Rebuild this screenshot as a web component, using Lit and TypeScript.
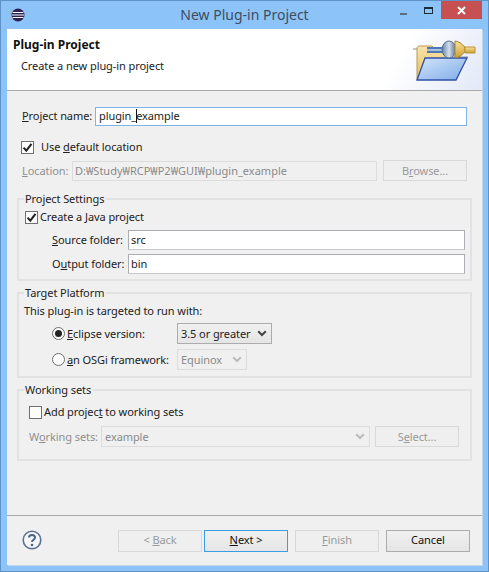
import { LitElement, html, css, svg } from "lit";
import { customElement } from "lit/decorators.js";

const chevron = (c: string) => svg`<svg width="10" height="7" viewBox="0 0 10 7"><path d="M1.2 1.2 5 5l3.8-3.8" fill="none" stroke="${c}" stroke-width="2"/></svg>`;
const check = svg`<svg width="11" height="11" viewBox="0 0 11 11"><path d="M1.6 5.6 4.3 8.6 9.5 1.8" fill="none" stroke="#222" stroke-width="2"/></svg>`;

@customElement("app-root")
export class AppRoot extends LitElement {
  static styles = css`
    :host { display: block; width: 489px; height: 572px; font: 11px/16px "Noto Sans", "Open Sans", sans-serif; letter-spacing: -0.08px; color: #222; }
    * { box-sizing: border-box; }
    u { text-underline-offset: 1px; }
    span { white-space: nowrap; }
    .win { height: 572px; border: 1px solid #5f93c6; background: #8cc4fa; display: flex; flex-direction: column; }
    .title { height: 28px; flex: none; display: grid; grid-template-columns: 1fr auto 1fr; align-items: start; }
    .logo { margin: 6px 0 0 9px; display: block; }
    .title-text { font-size: 14px; line-height: 28px; letter-spacing: 0; color: #3f4d5c; }
    .wctl { display: flex; justify-content: flex-end; align-items: flex-start; margin-right: 6px; }
    .min { width: 7px; height: 2px; background: #5b6f84; margin: 12px 17px 0 0; }
    .max { width: 9px; height: 7px; border: 1px solid #1e2b38; border-top-width: 2px; margin: 6px 8px 0 0; }
    .close { width: 41px; height: 18px; background: #c75050; display: grid; place-items: center; }
    .client { flex: 1; margin: 0 6px 6px 6px; background: #f0f0f0; display: flex; flex-direction: column; box-shadow: 1px 1px 0 #c4d8ec; }
    .head { height: 62px; flex: none; background: linear-gradient(120deg, #fff 80%, #e2e8f8 100%); border-bottom: 1px solid #a9a9a9; display: flex; justify-content: space-between; padding: 8px 4px 0 6px; }
    .head svg { margin-top: -1px; }
    .head h1 { margin: 0; font-size: 12px; line-height: 16px; font-weight: 700; letter-spacing: 0; color: #111; }
    .head p { margin: 5px 0 0 8px; color: #222; }
    .body { flex: 1; padding: 15px 10px 0 10px; }
    .row { display: flex; align-items: center; padding: 0 5px; }
    .name { height: 21px; padding-bottom: 1px; }
    .nl { width: 73px; flex: none; }
    .field { height: 20px; background: #fff; border: 1px solid #abadb3; border-bottom-color: #c8c8cc; display: flex; align-items: center; padding: 0 0 1px 2px; flex: 1; }
    .field.focus { border: 1px solid #7eb4ea; padding-left: 3px; height: 19px; }
    .caret { width: 1px; height: 14px; background: #111; margin-right: -1px; }
    .cb { width: 13px; height: 13px; flex: none; background: #fdfdfd; border: 1px solid #707070; display: grid; place-items: center; }
    .dis { color: #8f8f8f; }
    .off { height: 20px; background: #f0f0f0; border: 1px solid #dcdcdc; color: #8a8a8a; display: flex; align-items: center; padding-left: 2px; letter-spacing: 0; }
    .btn { height: 21px; width: 84px; flex: none; display: grid; place-items: center; border: 1px solid #d9d9d9; background: #efefef; color: #9a9a9a; }
    .btn.live { color: #111; border-color: #acacac; background: linear-gradient(#f0f0f0, #e5e5e5); }
    .btn.def { border-color: #3c9ce6; color: #111; background: linear-gradient(#f0f0f0, #e5e5e5); margin-left: 2px; }
    .btn.gap { margin-left: 7px; }
    fieldset { margin: 4px 0 0; padding: 0 5px; border: 2px solid #e2e2e2; min-width: 0; }
    legend { padding: 0 2px 0 1px; margin-left: 0; line-height: 16px; }
    .sel { height: 21px; flex: none; display: flex; align-items: center; justify-content: space-between; border: 1px solid #acacac; background: linear-gradient(#f0f0f0, #e5e5e5); padding: 0 4px 0 3px; }
    .sel.dim { background: #f0f0f0; border-color: #dcdcdc; color: #8a8a8a; }
    .radio { width: 13px; height: 13px; flex: none; border-radius: 50%; border: 1px solid #707070; background: #fdfdfd; display: grid; place-items: center; }
    .dot { width: 7px; height: 7px; border-radius: 50%; background: #222; }
    .foot { height: 50px; flex: none; border-top: 1px solid #a9a9a9; display: flex; align-items: flex-start; padding: 14px 0 0 15px; }
    .foot .btn { height: 22px; padding-bottom: 2px; }
    .help { display: block; }
    .btns { display: flex; margin-left: 76px; }

    .uf { height: 16px; margin-top: 12px; }
    .uf .cb { margin-left: -1px; }
    .uf .t { margin-left: 7px; }
    .loc { margin-top: 5px; height: 21px; }
    .ll { width: 50px; flex: none; }
    .locf { width: 305px; flex: none; }
    .loc .btn { margin-left: 6px; }

    .g1 { margin-top: 10px; padding-bottom: 5px; }
    .c1 { padding: 0 0 0 1px; height: 16px; margin-top: 2px; }
    .c1 .t { margin-left: 2px; }
    .sub { padding: 0 0 0 28px; }
    .s1 { margin-top: 5px; }
    .s2 { margin-top: 4px; }
    .lab { width: 76px; flex: none; }

    .g2 { padding-bottom: 6px; }
    .pl { padding: 0; height: 16px; margin-top: 2px; }
    .r1 { padding: 0 0 0 28px; margin-top: 4px; }
    .r2 { padding: 0 0 0 28px; margin-top: 5px; }
    .rl { width: 110px; margin-left: 2px; flex: none; }
    .sa { width: 95px; }
    .sb { width: 70px; }

    .g3 { padding-bottom: 12px; }
    .c3 { height: 16px; margin-top: 6px; }
    .c3 .t { margin-left: 2px; }
    .w { margin-top: 6px; }
    .wl { width: 72px; flex: none; }
    .sw { width: 269px; }
    .w .btn { margin-left: 5px; }
  `;

  render() {
    return html`<div class="win">
      <div class="title">
        <svg class="logo" width="16" height="16" viewBox="0 0 16 16">
          <circle cx="8" cy="8" r="6.5" fill="#2c2255"/>
          <path d="M3 1.8A7 7 0 0 0 3 14.2 7.6 7.6 0 0 1 3 1.8z" fill="#f7941e"/>
          <path d="M2.6 5.5h10.8M1.9 8h12.2M2.6 10.5h10.8" stroke="#fff" stroke-width="1.2"/>
        </svg>
        <div class="title-text">New Plug-in Project</div>
        <div class="wctl">
          <div class="min"></div><div class="max"></div>
          <div class="close"><svg width="9" height="9" viewBox="0 0 9 9"><path d="M1 1l7 7M8 1L1 8" stroke="#fff" stroke-width="2"/></svg></div>
        </div>
      </div>
      <div class="client">
        <div class="head">
          <div><h1>Plug-in Project</h1><p>Create a new plug-in project</p></div>
          <svg width="66" height="50" viewBox="0 0 66 50">
            <defs>
              <linearGradient id="f" x1="0" y1="0" x2="1" y2="1"><stop offset="0" stop-color="#d3e6fb"/><stop offset="1" stop-color="#7fabe8"/></linearGradient>
              <linearGradient id="b" x1="0" y1="0" x2="0" y2="1"><stop offset="0" stop-color="#f8e4aa"/><stop offset="1" stop-color="#e8bd5c"/></linearGradient>
              <linearGradient id="k" x1="0" y1="0" x2="1" y2="0"><stop offset="0" stop-color="#5f82ad"/><stop offset=".5" stop-color="#d6dfea"/><stop offset="1" stop-color="#4f7099"/></linearGradient>
              <linearGradient id="g" x1="0" y1="0" x2="0" y2="1"><stop offset="0" stop-color="#fbe29a"/><stop offset="1" stop-color="#cc9e30"/></linearGradient>
            </defs>
            <path d="M1 13h6" stroke="#8f8f8f"/>
            <path d="M5 44V12c0-1 1-2 3-2h12l3 3h14v9L5 44z" fill="url(#b)" stroke="#b9975a"/>
            <path d="M15 11h21v6H15z" fill="#4f78b2"/><path d="M15 13h21v2H15z" fill="#a9c2e2"/>
            <path d="M42 21h14" stroke="#8f8f8f"/>
            <path d="M13 22h42L44 44H5z" fill="url(#f)" stroke="#2f50a8" stroke-width="1.3"/>
            <ellipse cx="37" cy="13.5" rx="7" ry="8.5" fill="url(#k)" stroke="#56708f"/>
            <path d="M43 5c6 1 7 4 10 6v5c-3 2-4 5-10 6z" fill="url(#g)" stroke="#a98428"/>
            <path d="M53 11h10v6H53z" fill="url(#g)" stroke="#b8933c"/>
          </svg>
        </div>
        <div class="body">
          <div class="row name">
            <span class="nl"><u>P</u>roject name:</span>
            <div class="field focus">plugin_<span class="caret"></span>example</div>
          </div>
          <div class="row uf">
            <span class="cb">${check}</span><span class="t">Use <u>d</u>efault location</span>
          </div>
          <div class="row loc">
            <span class="dis ll"><u>L</u>ocation:</span>
            <div class="off locf">D:₩Study₩RCP₩P2₩GUI₩plugin_example</div>
            <div class="btn"><span>B<u>r</u>owse...</span></div>
          </div>
          <fieldset class="g1">
            <legend>Project Settings</legend>
            <div class="row c1"><span class="cb">${check}</span><span class="t">Create a <u>J</u>ava project</span></div>
            <div class="row sub s1"><span class="lab"><u>S</u>ource folder:</span><div class="field">src</div></div>
            <div class="row sub s2"><span class="lab">O<u>u</u>tput folder:</span><div class="field">bin</div></div>
          </fieldset>
          <fieldset class="g2">
            <legend>Target Platform</legend>
            <div class="row pl">This plug-in is targeted to run with:</div>
            <div class="row r1"><span class="radio"><span class="dot"></span></span><span class="rl"><u>E</u>clipse version:</span><div class="sel sa"><span>3.5 or greater</span>${chevron("#444")}</div></div>
            <div class="row r2"><span class="radio"></span><span class="rl"><u>a</u>n OSGi framework:</span><div class="sel dim sb"><span>Equinox</span>${chevron("#bbb")}</div></div>
          </fieldset>
          <fieldset class="g3">
            <legend>Working sets</legend>
            <div class="row c3"><span class="cb"></span><span class="t">Add projec<u>t</u> to working sets</span></div>
            <div class="row w"><span class="dis wl">W<u>o</u>rking sets:</span><div class="sel dim sw"><span>example</span>${chevron("#bbb")}</div><div class="btn"><span>S<u>e</u>lect...</span></div></div>
          </fieldset>
        </div>
        <div class="foot">
          <svg class="help" width="20" height="20" viewBox="0 0 20 20">
            <circle cx="10" cy="10" r="8.8" fill="#f4f6fa" stroke="#5c7394" stroke-width="1.6"/>
            <path d="M7 7.6C7 5.8 8.4 5 10 5s3 .9 3 2.5c0 2.2-3 2.2-3 4.6" fill="none" stroke="#4a6285" stroke-width="2"/>
            <circle cx="10" cy="15" r="1.3" fill="#4a6285"/>
          </svg>
          <div class="btns">
            <div class="btn"><span>&lt; <u>B</u>ack</span></div>
            <div class="btn def"><span><u>N</u>ext &gt;</span></div>
            <div class="btn gap"><span><u>F</u>inish</span></div>
            <div class="btn live gap"><span>Cancel</span></div>
          </div>
        </div>
      </div>
    </div>`;
  }
}
